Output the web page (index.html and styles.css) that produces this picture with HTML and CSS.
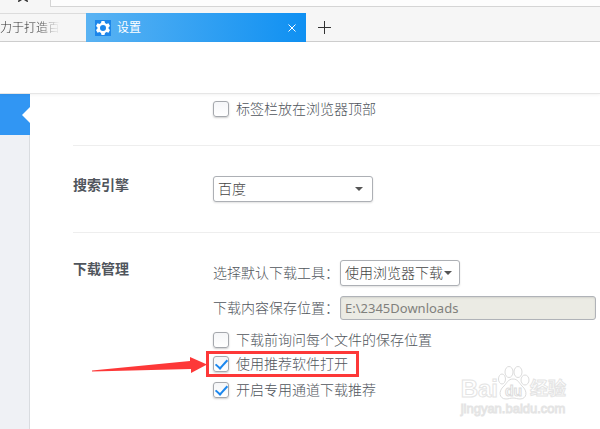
FILE: index.html
```
<!DOCTYPE html>
<html lang="zh-CN">
<head>
	<meta charset="UTF-8">
	<title>设置</title>
	<link rel="stylesheet" href="styles.css">
</head>
<body>
<div class="toolbar">
	<svg class="star" viewBox="0 0 14 14" width="14" height="14"><path d="M7 1l2 4 4 .5-3 3 1 4.500-4-2.500L3 13l1-4.500-3-3L5 5z" fill="none" stroke="#333" stroke-width="1.500"/></svg>
	<div class="address"></div>
</div>
<div class="tabs">
	<div class="tab"><span class="tab-title">力于打造百</span></div>
	<div class="tab selected">
		<svg class="gear" viewBox="0 0 16 16" width="16" height="16">
			<rect width="16" height="16" fill="#1c86ea"/>
			<path fill="#fff" fill-rule="evenodd" d="M6.500 1h3l.5 2 1.500.9 2-.6 1.500 2.600L13.600 7.300v1.400L15 10.100l-1.500 2.600-2-.6-1.500.9-.5 2h-3L6 13l-1.500-.9-2 .6L1 10.100l1.400-1.400V7.300L1 5.900l1.500-2.600 2 .6L6 3zM8 5a3 3 0 1 0 0 6 3 3 0 0 0 0-6z"/>
		</svg>
		<span class="tab-title">设置</span>
		<button class="tab-close" aria-label="关闭"><svg viewBox="0 0 8 8" width="8" height="8"><path d="M.5.5l7 7M7.500.5l-7 7" stroke="#fff"/></svg></button>
	</div>
	<button class="tab-add" aria-label="新标签"><svg viewBox="0 0 13 13" width="13" height="13"><path d="M6.500 0v13M0 6.500h13" stroke="#333"/></svg></button>
</div>
<div class="header"></div>
<div class="main">
	<div class="sidebar"><div class="side-item"></div></div>
	<div class="content">
		<div class="section first">
			<div class="fields">
				<label class="option"><input type="checkbox">标签栏放在浏览器顶部</label>
			</div>
		</div>
		<div class="section search">
			<h2>搜索引擎</h2>
			<div class="fields">
				<div class="select select-engine">
					<select aria-label="搜索引擎"><option>百度</option></select>
					<svg viewBox="0 0 8 4" width="8" height="4"><path d="M0 0h8L4 4z" fill="#555"/></svg>
				</div>
			</div>
		</div>
		<div class="section download">
			<h2>下载管理</h2>
			<div class="fields">
				<div class="field">
					<label for="tool">选择默认下载工具：</label>
					<div class="select select-tool">
						<select id="tool"><option>使用浏览器下载</option></select>
						<svg viewBox="0 0 8 4" width="8" height="4"><path d="M0 0h8L4 4z" fill="#555"/></svg>
					</div>
				</div>
				<div class="field">
					<label for="path">下载内容保存位置：</label>
					<input class="path" id="path" type="text" value="E:\2345Downloads" disabled>
				</div>
				<div class="options">
					<label class="option"><input type="checkbox">下载前询问每个文件的保存位置</label>
					<div class="marked">
						<label class="option"><input type="checkbox" checked>使用推荐软件打开</label>
						<svg class="arrow" viewBox="0 0 116 18" width="116" height="18"><path d="M0 14.500L98 5V1l17 7.500L99 17v-4L0 15.500z" fill="#fd3838"/></svg>
					</div>
					<label class="option"><input type="checkbox" checked>开启专用通道下载推荐</label>
				</div>
			</div>
		</div>
	</div>
</div>
<div class="watermark">
	<div class="brand">
		<span>Bai</span>
		<svg viewBox="0 0 32 36" width="32" height="36">
			<g fill="#fff" stroke="#dcdcdc">
				<ellipse cx="4" cy="14" rx="3.500" ry="5"/>
				<ellipse cx="11" cy="7" rx="4" ry="5.500"/>
				<ellipse cx="20" cy="7" rx="4" ry="5.500"/>
				<ellipse cx="27" cy="15" rx="4" ry="5"/>
				<path d="M15 14c-5 0-6 4-9 7-6 5-5 13 2 13 3 0 4-1 7-1s4 1 7 1c7 0 8-8 2-13-3-3-4-7-9-7z"/>
			</g>
			<text class="du" x="7" y="31">du</text>
		</svg>
		<span class="cn">经验</span>
	</div>
	<div class="site">jingyan.baidu.com</div>
</div>
</body>
</html>
```
FILE: styles.css
```
* {
	margin: 0;
	padding: 0;
	box-sizing: border-box;
}

body {
	position: relative;
	display: flex;
	flex-direction: column;
	min-height: 100vh;
	overflow: hidden;
	background: #fff;
	color: #50555c;
	font: 300 14px/20px "Noto Sans", "Noto Sans CJK SC", sans-serif;
}

svg {
	display: block;
}

button {
	border: none;
	background: none;
	cursor: pointer;
}

.toolbar {
	display: flex;
	height: 13px;
	background: #f6f6f6;
	overflow: hidden;
}

.star {
	margin: -12px 20px 0 16px;
}

.address {
	flex: 1;
	height: 7px;
	background: #fdfdfd;
	border: 1px solid #d5d5d5;
	border-width: 0 0 1px 1px;
}

.tabs {
	display: flex;
	height: 29px;
	background: #f6f6f6;
	border-bottom: 1px solid #cfcfcf;
	font-size: 12px;
}

.tab {
	display: flex;
	align-items: center;
	width: 86px;
	height: 28px;
	border-top: 1px solid #dcdcdc;
	color: #333;
}

.tab .tab-title {
	-webkit-mask-image: linear-gradient(to right, #000 38px, transparent 60px);
}

.tab.selected {
	width: 220px;
	height: 29px;
	padding: 0 10px 0 9px;
	border-top: none;
	background: linear-gradient(to right, #5ab3f3, #0f90f2);
	color: #fff;
	font-weight: 400;
}

.tab.selected .tab-title {
	flex: 1;
	margin-left: 6px;
	-webkit-mask-image: none;
}

.tab-add {
	padding: 0 12px;
}

.header {
	position: relative;
	height: 52px;
	border-bottom: 1px solid #e6e6e6;
	box-shadow: 0 1px 3px rgba(0, 0, 0, .05);
}

.main {
	display: flex;
	flex: 1;
}

.sidebar {
	width: 30px;
	background: #eff1f5;
	border-right: 1px solid #d9dce0;
}

.side-item {
	display: flex;
	align-items: center;
	justify-content: flex-end;
	height: 41px;
	margin-right: -1px;
	background: #3196f3;
}

.side-item::after {
	content: "";
	border: 8px solid transparent;
	border-right-color: #fff;
	border-left: none;
}

.content {
	flex: 1;
	padding-left: 43px;
}

.section {
	display: grid;
	grid-template-columns: 140px 1fr;
	border-bottom: 1px solid #eee;
}

.section h2 {
	font-size: 14px;
	line-height: 18px;
}

.fields {
	grid-column: 2;
}

.first {
	padding: 2px 0 24px;
}

.search {
	padding: 30px 0;
}

.download {
	padding-top: 27px;
	border-bottom: none;
}

.field {
	display: flex;
	align-items: center;
	margin-bottom: 10px;
}

.field label {
	width: 127px;
	white-space: nowrap;
}

.options {
	margin-top: -3px;
}

.option {
	display: flex;
	align-items: center;
	width: max-content;
	height: 25px;
}

.option input {
	display: flex;
	justify-content: center;
	width: 16px;
	height: 16px;
	margin-right: 7px;
	appearance: none;
	background: linear-gradient(#f5f6f8, #fff);
	border: 1px solid #a5a8ad;
	border-radius: 3px;
	box-shadow: 0 1px 2px rgba(0, 0, 0, .2);
}

.option input:checked::after {
	content: "";
	width: 5px;
	height: 10px;
	border: solid #1b87ee;
	border-width: 0 2px 2px 0;
	transform: rotate(42deg);
}

.select {
	display: inline-grid;
	align-items: center;
}

.select select,
.select svg {
	grid-area: 1 / 1;
}

.select select {
	height: 26px;
	padding: 0 16px 0 4px;
	appearance: none;
	background: #fff;
	border: 1px solid #adb0b5;
	border-radius: 3px;
	box-shadow: 0 1px 2px rgba(0, 0, 0, .12);
	color: #444;
	font: inherit;
}

.select svg {
	justify-self: end;
	margin-right: 10px;
	pointer-events: none;
}

.select-engine {
	width: 160px;
}

.select-tool svg {
	margin-right: 8px;
}

.path {
	flex: 1;
	min-width: 0;
	height: 24px;
	margin-right: 4px;
	padding-left: 4px;
	background: #ebebe4;
	border: 1px solid #b0b3b8;
	border-radius: 3px;
	box-shadow: inset 0 1px 2px rgba(0, 0, 0, .1);
	color: #80807c;
	font: 400 13px "Noto Sans", sans-serif;
}

/* red frame with its pointer */
.marked {
	position: relative;
	width: max-content;
	margin: -1px 0 0 -7px;
	padding: 0 8px 0 4px;
	border: 3px solid #fd3838;
}

.marked .option {
	height: 20px;
}

.arrow {
	position: absolute;
	right: 100%;
	top: 2px;
	margin-right: 1px;
}

.watermark {
	position: absolute;
	right: 34px;
	bottom: 12px;
	color: #fff;
	font-family: "Liberation Sans", "Noto Sans CJK SC", sans-serif;
	-webkit-text-stroke: 1px #e4e4e4;
}

.brand {
	display: flex;
	align-items: flex-end;
	font-size: 24px;
	font-weight: bold;
	line-height: 24px;
}

.brand .cn {
	font-size: 18px;
}

.du {
	font-size: 14px;
	font-weight: bold;
	fill: #fff;
	stroke: #dcdcdc;
}

.site {
	font-size: 13px;
	line-height: 16px;
}
```
